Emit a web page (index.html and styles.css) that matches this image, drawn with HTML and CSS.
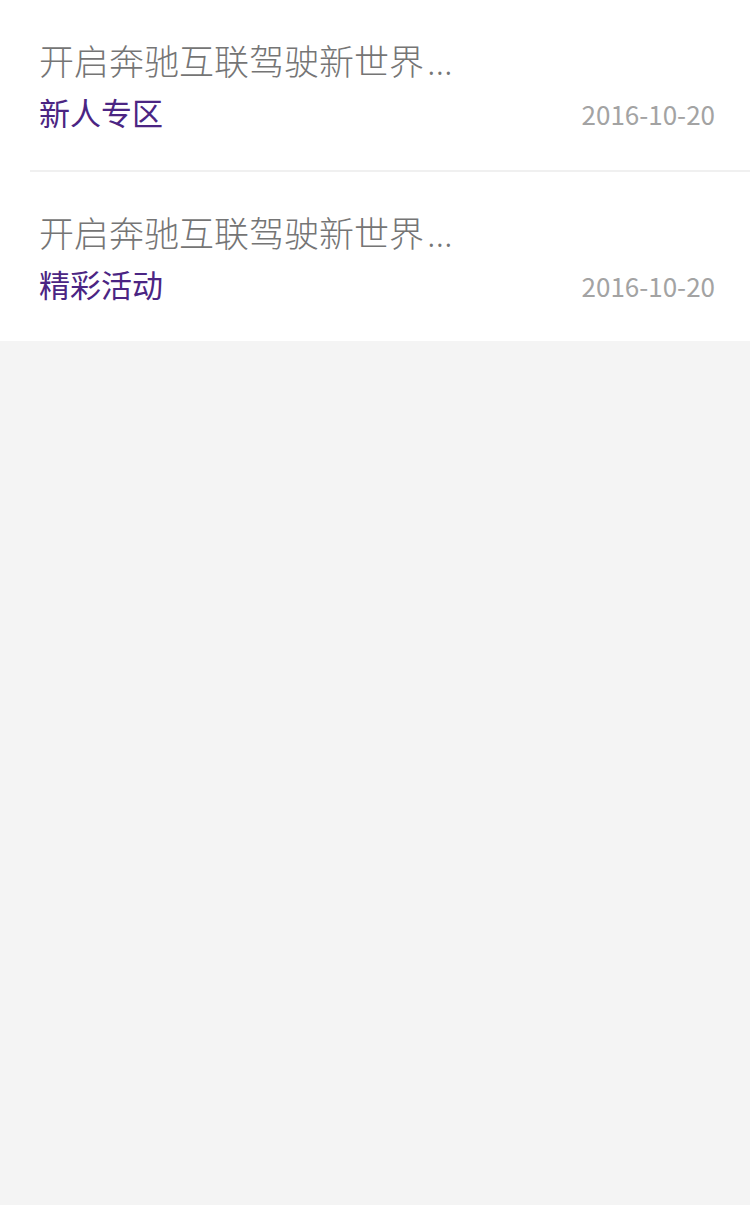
FILE: index.html
```html
<!DOCTYPE html>
<html lang="zh-CN">
<head>
<meta charset="utf-8">
<link rel="stylesheet" href="styles.css">
</head>
<body>
<ul class="list">
  <li class="item">
    <div class="title">开启奔驰互联驾驶新世界<span class="ell">…</span></div>
    <div class="meta">
      <span class="cat">新人专区</span>
      <span class="date">2016-10-20</span>
    </div>
  </li>
  <li class="item">
    <div class="title">开启奔驰互联驾驶新世界<span class="ell">…</span></div>
    <div class="meta">
      <span class="cat">精彩活动</span>
      <span class="date">2016-10-20</span>
    </div>
  </li>
</ul>
</body>
</html>
```
FILE: styles.css
```css
html, body {
  margin: 0;
  padding: 0;
  background: #f4f4f4;
  font-family: "Noto Sans CJK SC", "Noto Sans", sans-serif;
}
.list {
  list-style: none;
  margin: 0;
  padding: 0 0 0 30px;
  background: #fff;
}
.item {
  height: 170px;
  box-sizing: border-box;
  padding: 36px 35px 0 9px;
}
.item + .item {
  border-top: 2px solid #f0f0f0;
  height: 171px;
}
.title {
  height: 48px;
  font-size: 35px;
  line-height: 48px;
  color: #757575;
  white-space: nowrap;
  font-weight: 300;
}
.ell {
  font-family: "Noto Sans", sans-serif;
  margin-left: 3px;
  line-height: 1;
}
.meta {
  display: flex;
  justify-content: space-between;
  align-items: baseline;
  margin-top: 8px;
}
.cat {
  font-size: 31px;
  line-height: 40px;
  color: #4b2583;
}
.date {
  font-size: 26px;
  color: #a3a3a3;
}
```
